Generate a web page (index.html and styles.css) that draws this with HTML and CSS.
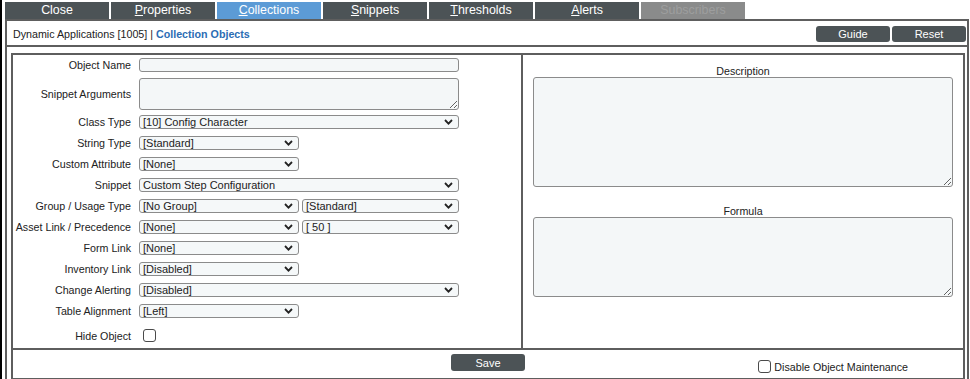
FILE: index.html
```html
<!DOCTYPE html>
<html lang="en">
<head>
    <meta charset="UTF-8">
    <title>Collection Objects</title>
    <link rel="stylesheet" href="styles.css">
</head>
<body>
    <div class="tabs">
        <div class="tab">Close</div>
        <div class="tab"><u>P</u>roperties</div>
        <div class="tab active"><u>C</u>ollections</div>
        <div class="tab"><u>S</u>nippets</div>
        <div class="tab"><u>T</u>hresholds</div>
        <div class="tab"><u>A</u>lerts</div>
        <div class="tab disabled">Subscribers</div>
    </div>

    <div class="panel">
        <div class="panel-head">
            <div class="crumb">Dynamic Applications [1005] | <b>Collection Objects</b></div>
            <div class="head-buttons">
                <button class="btn">Guide</button>
                <button class="btn">Reset</button>
            </div>
        </div>

        <div class="editor">
            <div class="columns">
                <div class="form">
                    <label>Object Name</label>
                    <input type="text" class="field">

                    <label>Snippet Arguments</label>
                    <textarea class="field args"></textarea>

                    <label>Class Type</label>
                    <span class="sel"><select><option>[10] Config Character</option></select><svg width="9" height="6" viewBox="0 0 9 6"><path d="M1 1 L4.5 4.6 L8 1" fill="none" stroke="#222" stroke-width="1.8"/></svg></span>

                    <label>String Type</label>
                    <span class="sel half"><select><option>[Standard]</option></select><svg width="9" height="6" viewBox="0 0 9 6"><path d="M1 1 L4.5 4.6 L8 1" fill="none" stroke="#222" stroke-width="1.8"/></svg></span>

                    <label>Custom Attribute</label>
                    <span class="sel half"><select><option>[None]</option></select><svg width="9" height="6" viewBox="0 0 9 6"><path d="M1 1 L4.5 4.6 L8 1" fill="none" stroke="#222" stroke-width="1.8"/></svg></span>

                    <label>Snippet</label>
                    <span class="sel"><select><option>Custom Step Configuration</option></select><svg width="9" height="6" viewBox="0 0 9 6"><path d="M1 1 L4.5 4.6 L8 1" fill="none" stroke="#222" stroke-width="1.8"/></svg></span>

                    <label>Group / Usage Type</label>
                    <div class="pair">
                        <span class="sel half"><select><option>[No Group]</option></select><svg width="9" height="6" viewBox="0 0 9 6"><path d="M1 1 L4.5 4.6 L8 1" fill="none" stroke="#222" stroke-width="1.8"/></svg></span>
                        <span class="sel rest"><select><option>[Standard]</option></select><svg width="9" height="6" viewBox="0 0 9 6"><path d="M1 1 L4.5 4.6 L8 1" fill="none" stroke="#222" stroke-width="1.8"/></svg></span>
                    </div>

                    <label>Asset Link / Precedence</label>
                    <div class="pair">
                        <span class="sel half"><select><option>[None]</option></select><svg width="9" height="6" viewBox="0 0 9 6"><path d="M1 1 L4.5 4.6 L8 1" fill="none" stroke="#222" stroke-width="1.8"/></svg></span>
                        <span class="sel rest"><select><option>[ 50 ]</option></select><svg width="9" height="6" viewBox="0 0 9 6"><path d="M1 1 L4.5 4.6 L8 1" fill="none" stroke="#222" stroke-width="1.8"/></svg></span>
                    </div>

                    <label>Form Link</label>
                    <span class="sel half"><select><option>[None]</option></select><svg width="9" height="6" viewBox="0 0 9 6"><path d="M1 1 L4.5 4.6 L8 1" fill="none" stroke="#222" stroke-width="1.8"/></svg></span>

                    <label>Inventory Link</label>
                    <span class="sel half"><select><option>[Disabled]</option></select><svg width="9" height="6" viewBox="0 0 9 6"><path d="M1 1 L4.5 4.6 L8 1" fill="none" stroke="#222" stroke-width="1.8"/></svg></span>

                    <label>Change Alerting</label>
                    <span class="sel"><select><option>[Disabled]</option></select><svg width="9" height="6" viewBox="0 0 9 6"><path d="M1 1 L4.5 4.6 L8 1" fill="none" stroke="#222" stroke-width="1.8"/></svg></span>

                    <label>Table Alignment</label>
                    <span class="sel half"><select><option>[Left]</option></select><svg width="9" height="6" viewBox="0 0 9 6"><path d="M1 1 L4.5 4.6 L8 1" fill="none" stroke="#222" stroke-width="1.8"/></svg></span>

                    <label class="hide-label">Hide Object</label>
                    <input type="checkbox" class="check hide-check">
                </div>

                <div class="side">
                    <label>Description</label>
                    <textarea class="field desc"></textarea>
                    <label class="formula-label">Formula</label>
                    <textarea class="field formula"></textarea>
                </div>
            </div>

            <div class="editor-foot">
                <span></span>
                <button class="btn save">Save</button>
                <label class="maint"><input type="checkbox" class="check"> Disable Object Maintenance</label>
            </div>
        </div>
    </div>
</body>
</html>
```

FILE: styles.css
```css
body {
    margin: 0;
    padding: 2px 0 0 3px;
    border-left: 2px solid #000;
    min-height: 377px;
    font-family: "Liberation Sans", Arial, sans-serif;
    font-size: 10.7px;
    color: #222;
    background: #fff;
}

/* tab strip */
.tabs {
    display: flex;
    gap: 2px;
    height: 17px;
}

.tab {
    width: 104px;
    background-color: #4c5356;
    color: #fff;
    font-size: 12.4px;
    line-height: 17px;
    text-align: center;
}

.tab.active {
    background-color: #5c9bd6;
}

.tab.disabled {
    background-color: #8a8b8b;
    color: #9d9e9e;
}

/* outer panel */
.panel {
    margin-right: 1px;
    border: 2px solid #5e5e5e;
    border-bottom: none;
}

.panel-head {
    display: flex;
    justify-content: space-between;
    align-items: center;
    height: 24px;
    padding: 0 1px 0 6px;
    border-bottom: 2px solid #5e5e5e;
}

.crumb {
    padding-top: 2px;
}

.crumb b {
    color: #2c6db4;
}

.head-buttons {
    display: flex;
    gap: 2px;
    padding-top: 2px;
}

.btn {
    width: 74px;
    height: 16px;
    padding: 0;
    border: none;
    border-radius: 3px;
    background-color: #4c5356;
    color: #fff;
    font-family: "Liberation Sans", Arial, sans-serif;
    font-size: 11px;
}

/* editor box */
.editor {
    margin: 6px 2px 0 4px;
    border: 2px solid #5e5e5e;
}

.columns {
    display: flex;
    height: 293px;
    border-bottom: 2px solid #5e5e5e;
}

.form {
    width: 508px;
    border-right: 2px solid #5e5e5e;
    padding-top: 3px;
    display: grid;
    grid-template-columns: 118px 320px;
    grid-auto-rows: min-content;
    column-gap: 8px;
    row-gap: 7px;
    align-items: center;
}

.form label {
    text-align: right;
    white-space: nowrap;
}

.field {
    box-sizing: border-box;
    margin: 0;
    border: 1px solid #8b8b8b;
    border-radius: 3px;
    background-color: #f4f7f8;
    font-family: "Liberation Sans", Arial, sans-serif;
    font-size: 11px;
}

input.field {
    height: 14px;
    width: 320px;
}

.args {
    display: block;
    height: 32px;
    width: 320px;
    margin: -1px 0 -2px;
}

.sel {
    position: relative;
    display: block;
    width: 320px;
    height: 14px;
}

.sel.half {
    width: 160px;
}

.sel.rest {
    width: 157px;
}

.sel select {
    appearance: none;
    box-sizing: border-box;
    display: block;
    width: 100%;
    height: 14px;
    margin: 0;
    padding: 0 0 0 3px;
    border: 1px solid #8b8b8b;
    border-radius: 3px;
    background-color: #f5f8f9;
    color: #222;
    font-family: "Liberation Sans", Arial, sans-serif;
    font-size: 11px;
    line-height: 12px;
}

.sel svg {
    position: absolute;
    right: 6px;
    top: 4px;
}

.pair {
    display: flex;
    gap: 3px;
}

.check {
    appearance: none;
    box-sizing: border-box;
    width: 13px;
    height: 13px;
    margin: 0;
    border: 1px solid #4a4a4a;
    border-radius: 3px;
    background: #fff;
}

.hide-label {
    padding-top: 4px;
}

.hide-check {
    margin: 4px 0 0 4px;
}

/* right column */
.side {
    flex: 1;
    padding: 10px 10px 0;
    display: flex;
    flex-direction: column;
}

.side label {
    text-align: center;
    line-height: 12px;
}

.desc {
    height: 110px;
    resize: vertical;
}

.formula-label {
    margin-top: 18px;
}

.formula {
    height: 80px;
}

/* footer row */
.editor-foot {
    display: grid;
    grid-template-columns: 1fr auto 1fr;
    align-items: start;
    height: 28px;
}

.save {
    margin-top: 4px;
    height: 17px;
}

.maint {
    justify-self: end;
    margin: 10px 55px 0 0;
    display: flex;
    align-items: center;
    gap: 3px;
    font-size: 10.7px;
}
```
